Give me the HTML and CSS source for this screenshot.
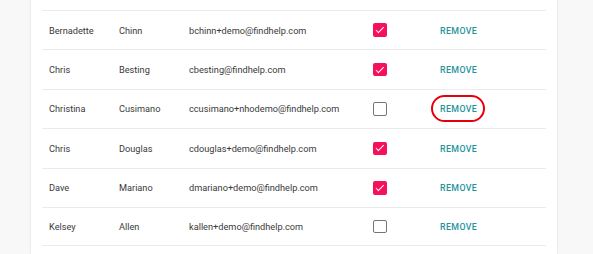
FILE: index.html
```html
<!DOCTYPE html>
<html>
<head>
  <meta charset="UTF-8">
  <title>Users</title>
  <link rel="stylesheet" href="styles.css">
</head>
<body>
  <div class="card">
    <div class="user-table">
      <div class="row">
        <div class="cell">Bernadette</div>
        <div class="cell">Chinn</div>
        <div class="cell">bchinn+demo@findhelp.com</div>
        <div class="cell"><span class="check checked"></span></div>
        <div class="cell"><span class="remove">REMOVE</span></div>
      </div>
      <div class="row">
        <div class="cell">Chris</div>
        <div class="cell">Besting</div>
        <div class="cell">cbesting@findhelp.com</div>
        <div class="cell"><span class="check checked"></span></div>
        <div class="cell"><span class="remove">REMOVE</span></div>
      </div>
      <div class="row">
        <div class="cell">Christina</div>
        <div class="cell">Cusimano</div>
        <div class="cell">ccusimano+nhodemo@findhelp.com</div>
        <div class="cell"><span class="check"></span></div>
        <div class="cell"><span class="remove circled">REMOVE</span></div>
      </div>
      <div class="row">
        <div class="cell">Chris</div>
        <div class="cell">Douglas</div>
        <div class="cell">cdouglas+demo@findhelp.com</div>
        <div class="cell"><span class="check checked"></span></div>
        <div class="cell"><span class="remove">REMOVE</span></div>
      </div>
      <div class="row">
        <div class="cell">Dave</div>
        <div class="cell">Mariano</div>
        <div class="cell">dmariano+demo@findhelp.com</div>
        <div class="cell"><span class="check checked"></span></div>
        <div class="cell"><span class="remove">REMOVE</span></div>
      </div>
      <div class="row">
        <div class="cell">Kelsey</div>
        <div class="cell">Allen</div>
        <div class="cell">kallen+demo@findhelp.com</div>
        <div class="cell"><span class="check"></span></div>
        <div class="cell"><span class="remove">REMOVE</span></div>
      </div>
    </div>
  </div>
</body>
</html>
```

FILE: styles.css
```css
body {
  margin: 0;
  padding: 0 0 0 31px;
  background-color: #f8f8f8;
  font-family: Roboto, "Liberation Sans", Arial, sans-serif;
  overflow: hidden;
}

.card {
  width: 526px;
  height: 254px;
  box-sizing: border-box;
  padding: 10px 11px 0;
  background: white;
  box-shadow: 0 0 2px rgba(0,0,0,0.14);
}

.row {
  display: grid;
  grid-template-columns: 70px 70px 184px 67px 1fr;
  align-items: center;
  height: 39.4px;
  box-sizing: border-box;
  padding-left: 7px;
  border-top: 1px solid #ebebeb;
}

.row:last-child {
  border-bottom: 1px solid #ebebeb;
}

.cell {
  font-size: 9.2px;
  color: #3a3a3a;
  white-space: nowrap;
}

.check {
  display: block;
  width: 13.5px;
  height: 13.5px;
  box-sizing: border-box;
  border: 1.5px solid #757575;
  border-radius: 2px;
}

.check.checked {
  border: none;
  background: #f5105b;
  position: relative;
}

.check.checked::after {
  content: "";
  position: absolute;
  left: 4.7px;
  top: 1.8px;
  width: 3px;
  height: 6.5px;
  border: solid white;
  border-width: 0 1.8px 1.8px 0;
  transform: rotate(45deg);
}

.remove {
  position: relative;
  display: inline-block;
  font-size: 8.8px;
  font-weight: 500;
  letter-spacing: 0.4px;
  color: #25939b;
}

.remove.circled::after {
  content: "";
  position: absolute;
  left: -9px;
  right: -8px;
  top: -9px;
  bottom: -8px;
  border: 2.6px solid #e6000e;
  border-radius: 14px;
}
```
